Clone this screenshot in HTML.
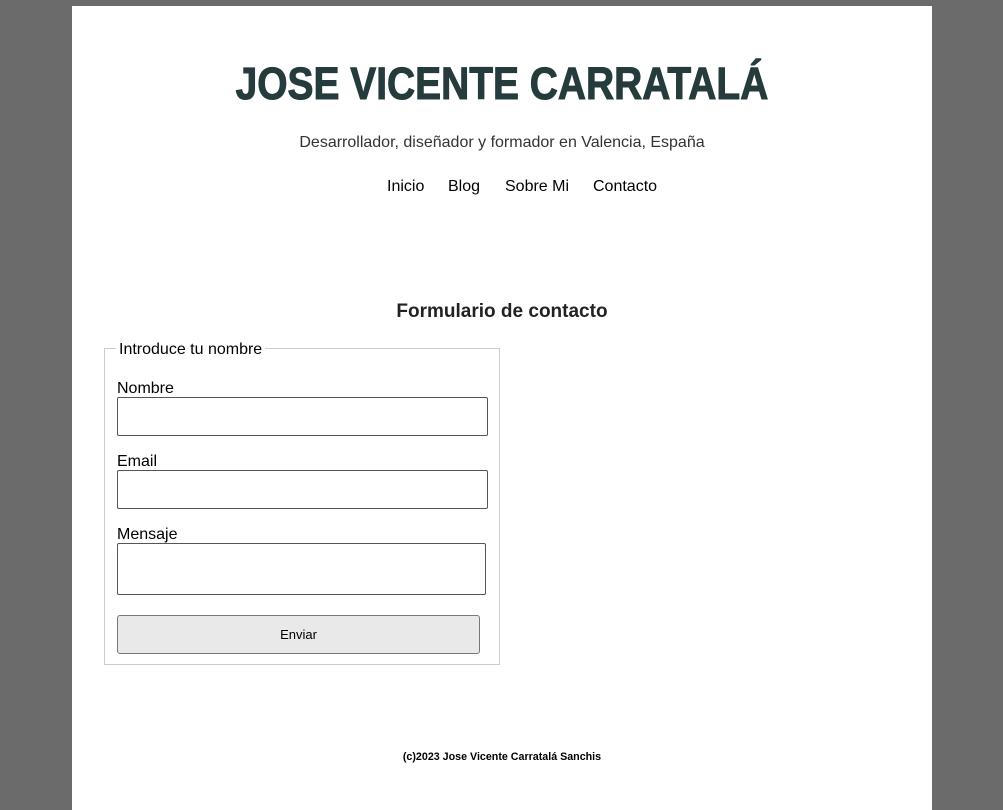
<!DOCTYPE html>
<html><head><meta charset="utf-8"><style>
body{margin:0;background:#6b6b6b;width:1003px;height:810px;overflow:hidden;font-family:"Liberation Sans",Arial,sans-serif;}
#page{position:absolute;left:72px;top:6px;width:860px;height:804px;background:#fff;}
.a{position:absolute;white-space:nowrap;}
h1{position:absolute;left:0;width:860px;top:52px;margin:0;text-align:center;font-size:45px;font-weight:bold;color:#253b3c;}
h1 span{display:inline-block;transform:scaleX(0.865);transform-origin:center;-webkit-text-stroke:1px #253b3c;}
.sub{left:0;width:860px;text-align:center;top:128px;font-size:16px;color:#333;}
.nav{top:172px;font-size:16px;color:#000;}
.h2{left:0;width:860px;text-align:center;top:295px;font-size:19px;font-weight:bold;color:#222;}
fieldset{position:absolute;left:32px;top:342px;width:396px;height:317px;border:1px solid #ccc;margin:0;padding:0;box-sizing:border-box;}
.lbl{font-size:16px;color:#000;}
.inp{position:absolute;border:1px solid #555;border-radius:2px;box-sizing:border-box;background:#fff;}
.btn{position:absolute;left:45px;top:609px;width:363px;height:39px;border:1px solid #777;border-radius:3px;background:#e9e9e9;box-sizing:border-box;text-align:center;line-height:37px;font-size:13px;color:#000;}
.foot{left:0;width:860px;text-align:center;top:745px;font-size:10.7px;font-weight:bold;color:#000;}
</style></head><body>
<div id="page">
<h1><span>JOSE VICENTE CARRATALÁ</span></h1>
<div class="a sub">Desarrollador, diseñador y formador en Valencia, España</div>
<div class="a nav" style="left:315px">Inicio</div>
<div class="a nav" style="left:376px">Blog</div>
<div class="a nav" style="left:433px">Sobre Mi</div>
<div class="a nav" style="left:521px">Contacto</div>
<div class="a h2">Formulario de contacto</div>
<fieldset></fieldset>
<div class="a lbl" style="left:44px;top:335px;background:#fff;padding:0 3px;">Introduce tu nombre</div>
<div class="a lbl" style="left:45px;top:374px">Nombre</div>
<div class="inp" style="left:45px;top:391px;width:371px;height:39px"></div>
<div class="a lbl" style="left:45px;top:447px">Email</div>
<div class="inp" style="left:45px;top:464px;width:371px;height:39px"></div>
<div class="a lbl" style="left:45px;top:520px">Mensaje</div>
<div class="inp" style="left:45px;top:537px;width:369px;height:52px"></div>
<div class="btn">Enviar</div>
<div class="a foot">(c)2023 Jose Vicente Carratalá Sanchis</div>
</div>
</body></html>
